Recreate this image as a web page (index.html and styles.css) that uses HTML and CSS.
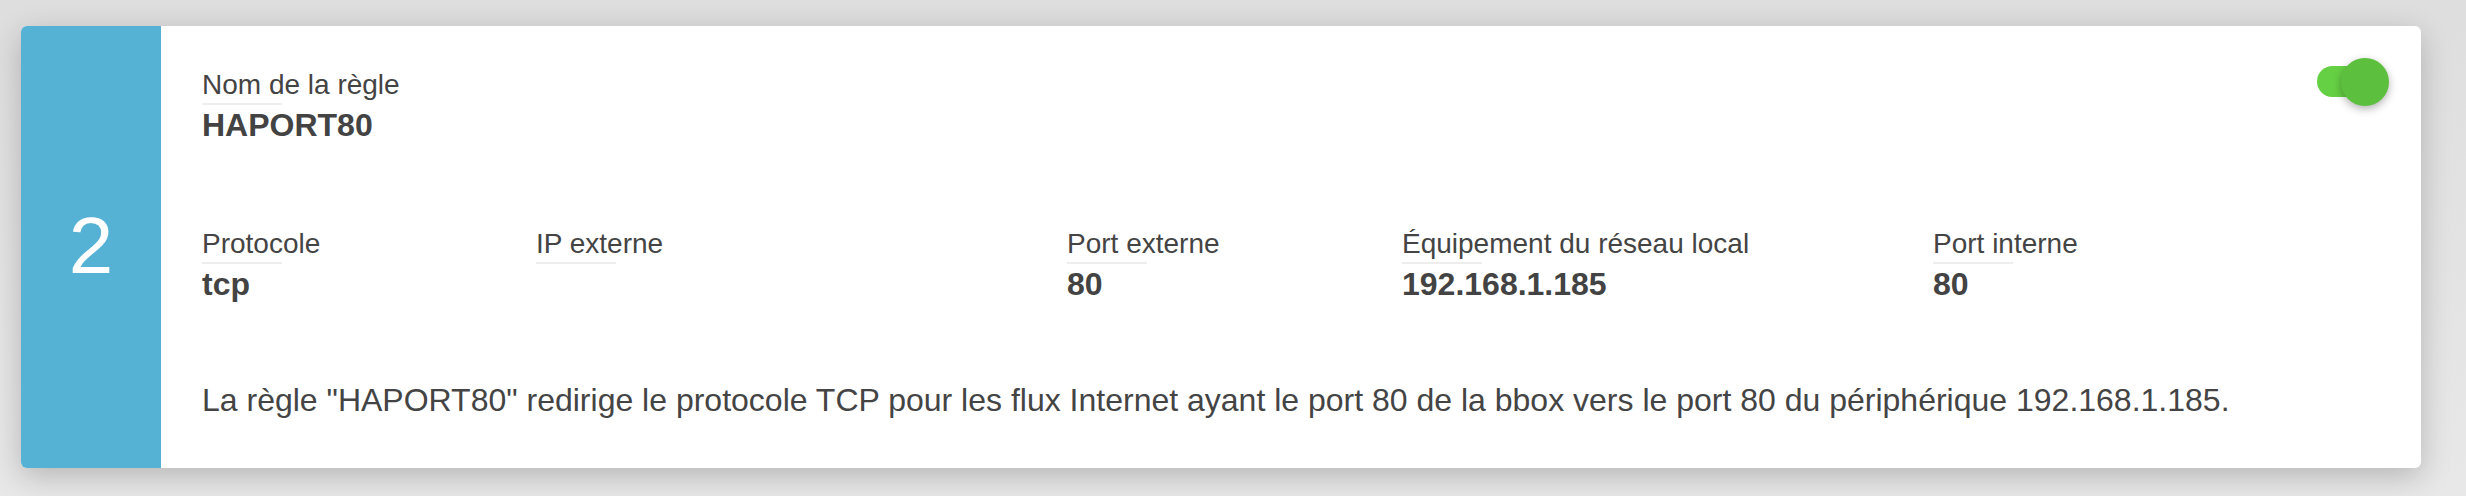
FILE: index.html
```html
<!DOCTYPE html>
<html lang="fr">
<head>
  <meta charset="UTF-8">
  <title>Règle NAT</title>
  <link rel="stylesheet" href="styles.css">
</head>
<body>

  <div class="rule-card">
    <div class="rule-index">2</div>

    <div class="rule-body">
      <div class="rule-header">
        <div class="field">
          <div class="field-label">Nom de la règle</div>
          <div class="field-value">HAPORT80</div>
        </div>
        <div class="toggle is-on" role="switch" aria-checked="true">
          <span class="toggle-knob"></span>
        </div>
      </div>

      <div class="rule-fields">
        <div class="field">
          <div class="field-label">Protocole</div>
          <div class="field-value">tcp</div>
        </div>
        <div class="field">
          <div class="field-label">IP externe</div>
          <div class="field-value"></div>
        </div>
        <div class="field">
          <div class="field-label">Port externe</div>
          <div class="field-value">80</div>
        </div>
        <div class="field">
          <div class="field-label">Équipement du réseau local</div>
          <div class="field-value">192.168.1.185</div>
        </div>
        <div class="field">
          <div class="field-label">Port interne</div>
          <div class="field-value">80</div>
        </div>
      </div>

      <p class="rule-summary">La règle "HAPORT80" redirige le protocole TCP pour les flux Internet ayant le port 80 de la bbox vers le port 80 du périphérique 192.168.1.185.</p>
    </div>
  </div>

</body>
</html>
```

FILE: styles.css
```css
* {
  box-sizing: border-box;
  margin: 0;
  padding: 0;
}

body {
  font-family: 'Liberation Sans', Arial, Helvetica, sans-serif;
  background: linear-gradient(180deg, #dedede, #e8e8e8);
  min-height: 100vh;
  color: #444;
  padding: 26px 0 0 21px;
}

.rule-card {
  display: flex;
  width: 2400px;
  height: 442px;
  background-color: #fff;
  border-radius: 6px;
  box-shadow: 0 8px 30px rgba(0, 0, 0, 0.22);
  overflow: hidden;
}

.rule-index {
  flex: 0 0 140px;
  background-color: #56b2d5;
  color: #fff;
  font-size: 80px;
  display: flex;
  justify-content: center;
  align-items: center;
  padding-bottom: 2px;
}

.rule-body {
  flex: 1;
  padding: 43px 32px 0 41px;
}

.rule-header {
  display: flex;
  justify-content: space-between;
  align-items: flex-start;
}

.field-label {
  font-size: 28px;
  line-height: 32px;
}

.field-label::after {
  content: "";
  display: block;
  width: 80px;
  height: 2px;
  margin-top: 2px;
  background-color: #eee;
}

.field-value {
  font-size: 32px;
  line-height: 36px;
  font-weight: bold;
  margin-top: 2px;
  min-height: 36px;
  color: #434343;
}

.rule-fields {
  display: grid;
  grid-template-columns: 334px 531px 335px 531px 1fr;
  margin-top: 85px;
}

.rule-summary {
  font-size: 32px;
  line-height: 36px;
  margin-top: 80px;
}

/* switch */
.toggle {
  position: relative;
  width: 72px;
  height: 48px;
  margin-top: -11px;
}

.toggle::before {
  content: "";
  position: absolute;
  left: 0;
  top: 8px;
  width: 60px;
  height: 31px;
  border-radius: 16px;
  background-color: #66d044;
}

.toggle-knob {
  position: absolute;
  right: 0;
  top: 0;
  width: 48px;
  height: 48px;
  border-radius: 50%;
  background-color: #5cbf3d;
  box-shadow: 0 3px 8px rgba(0, 0, 0, 0.3);
}
```
